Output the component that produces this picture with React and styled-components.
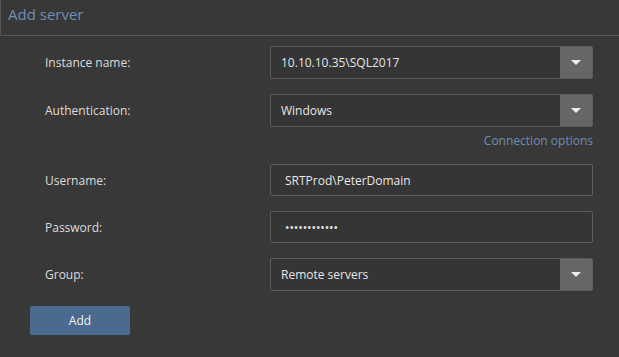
import React from "react";
import styled, { createGlobalStyle } from "styled-components";

const Global = createGlobalStyle`
  html, body { margin: 0; padding: 0; background: #383838; }
  body { font-family: "Open Sans", "Noto Sans", sans-serif; width: 619px; height: 357px; overflow: hidden; }
  * { box-sizing: border-box; }
`;

const Page = styled.div`
  width: 619px;
  height: 357px;
  background: #383838;
  display: flex;
  flex-direction: column;
`;

const Header = styled.div`
  height: 36px;
  flex: none;
  border-left: 1px solid #555;
  border-bottom: 1px solid #555;
  padding: 0 0 8px 7px;
  display: flex;
  align-items: center;
  color: #6f8db3;
  font-size: 15px;
`;

const Form = styled.div`
  display: flex;
  flex-direction: column;
  padding: 10px 0 0 45px;
`;

const Row = styled.div`
  display: flex;
  align-items: center;
  margin-bottom: ${(p) => p.$gap ?? 15}px;
`;

const Label = styled.div`
  width: 225px;
  flex: none;
  color: #dcdcdc;
  font-size: 12px;
`;

const Control = styled.div`
  width: 323px;
  flex: none;
`;

const LinkRow = styled.div`
  width: 548px;
  display: flex;
  justify-content: flex-end;
  margin: -9px 0 15px;
`;

const Link = styled.a`
  color: #6f8db3;
  font-size: 12px;
  text-decoration: none;
  line-height: 16px;
`;

const Select = styled.div`
  display: flex;
  height: 33px;
  border: 1px solid #5c5c5c;
  border-radius: 2px;
  background: #353535;
  overflow: hidden;
`;

const SelectValue = styled.div`
  flex: 1;
  display: flex;
  align-items: center;
  padding-left: 10px;
  color: #e6e6e6;
  font-size: 12px;
`;

const SelectButton = styled.div`
  width: 32px;
  background: #666;
  display: flex;
  align-items: center;
  justify-content: center;
`;

const Caret = styled.div`
  width: 0;
  height: 0;
  border-left: 5px solid transparent;
  border-right: 5px solid transparent;
  border-top: 5px solid #ececec;
`;

const Input = styled.div`
  height: 32px;
  border: 1px solid #5c5c5c;
  border-radius: 2px;
  background: #353535;
  display: flex;
  align-items: center;
  padding-left: 14px;
  color: #e6e6e6;
  font-size: 12px;
  letter-spacing: ${(p) => (p.$password ? "-0.1px" : "0")};
`;

const Actions = styled.div`
  padding: 0 0 0 30px;
`;

const Button = styled.button`
  width: 100px;
  height: 29px;
  background: #4a6a8f;
  border: none;
  border-radius: 2px;
  color: #f2f2f2;
  font-family: inherit;
  font-size: 12px;
  padding: 0;
`;

const Dropdown = ({ value }) => (
  <Select>
    <SelectValue>{value}</SelectValue>
    <SelectButton>
      <Caret />
    </SelectButton>
  </Select>
);

export default function App() {
  return (
    <Page>
      <Global />
      <Header>Add server</Header>
      <Form>
        <Row>
          <Label>Instance name:</Label>
          <Control>
            <Dropdown value="10.10.10.35\SQL2017" />
          </Control>
        </Row>
        <Row>
          <Label>Authentication:</Label>
          <Control>
            <Dropdown value="Windows" />
          </Control>
        </Row>
        <LinkRow>
          <Link href="#">Connection options</Link>
        </LinkRow>
        <Row>
          <Label>Username:</Label>
          <Control>
            <Input>SRTProd\PeterDomain</Input>
          </Control>
        </Row>
        <Row>
          <Label>Password:</Label>
          <Control>
            <Input $password>••••••••••••</Input>
          </Control>
        </Row>
        <Row>
          <Label>Group:</Label>
          <Control>
            <Dropdown value="Remote servers" />
          </Control>
        </Row>
      </Form>
      <Actions>
        <Button>Add</Button>
      </Actions>
    </Page>
  );
}
